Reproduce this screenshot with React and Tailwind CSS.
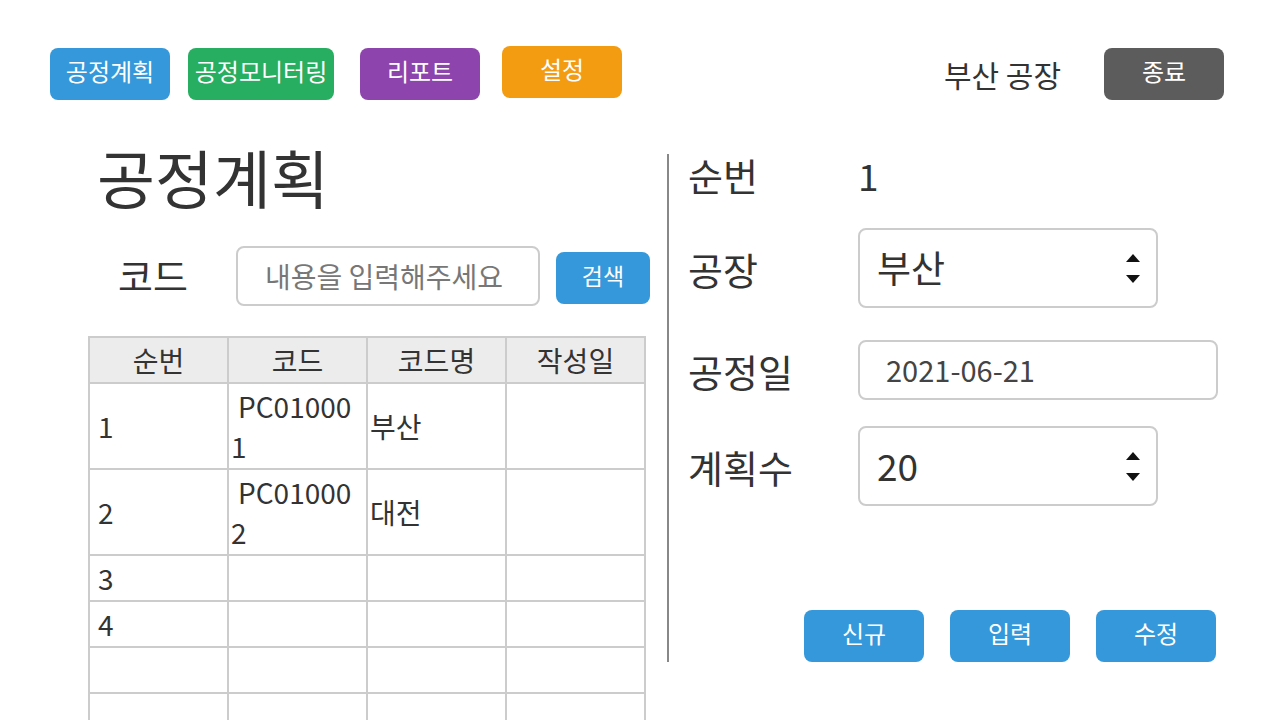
import { useState } from "react";

const FONT = "font-['Noto_Sans_CJK_KR','Noto_Sans',sans-serif]";

function NavBtn({ color, className = "", children }) {
  return (
    <button className={`h-[52px] w-[120px] shrink-0 rounded-lg pb-[6px] text-[24px] text-white ${color} ${className}`}>
      {children}
    </button>
  );
}

function Spinner() {
  return (
    <svg width="16" height="36" viewBox="0 0 16 36" className="shrink-0">
      <path d="M8 4 L15 12 L1 12 Z" fill="#111" />
      <path d="M1 25 L15 25 L8 33 Z" fill="#111" />
    </svg>
  );
}

const ROWS = [
  { no: "1", code: ["PC01000", "1"], name: "부산" },
  { no: "2", code: ["PC01000", "2"], name: "대전" },
  { no: "3" },
  { no: "4" },
  {},
  {},
];

export default function App() {
  const [keyword, setKeyword] = useState("");

  const td = "border-2 border-[#ccc] py-[2px] leading-[40px] align-middle";

  return (
    <div className={`w-[1280px] h-[720px] overflow-hidden bg-white text-[#333] ${FONT}`}>
      {/* Top nav */}
      <div className="flex items-start pt-[48px] pl-[50px] pr-[56px]">
        <NavBtn color="bg-[#3498db]">공정계획</NavBtn>
        <NavBtn color="bg-[#27ae60]" className="ml-[18px] !w-[146px]">공정모니터링</NavBtn>
        <NavBtn color="bg-[#8e44ad]" className="ml-[26px]">리포트</NavBtn>
        <NavBtn color="bg-[#f39c12]" className="ml-[22px] -mt-[2px]">설정</NavBtn>
        <div className="ml-auto flex items-center">
          <span className="text-[30px] text-[#333]">부산 공장</span>
          <NavBtn color="bg-[#5c5c5c]" className="ml-[43px]">종료</NavBtn>
        </div>
      </div>

      {/* Main */}
      <div className="flex mt-[30px]">
        {/* Left */}
        <div className="ml-[88px] w-[558px] shrink-0">
          <h1 className="ml-[9px] text-[63px] leading-[92px] font-normal">공정계획</h1>

          <div className="flex items-start mt-[24px]">
            <span className="ml-[30px] w-[118px] shrink-0 text-[38px] leading-[58px]">코드</span>
            <input
              value={keyword}
              onChange={e => setKeyword(e.target.value)}
              placeholder="내용을 입력해주세요"
              className="w-[304px] h-[60px] shrink-0 rounded-lg border-2 border-[#ccc] px-[27px] text-[28px] outline-none placeholder:text-[#777]"
            />
            <button className="ml-[16px] mt-[6px] h-[52px] w-[94px] shrink-0 rounded-lg bg-[#3498db] pb-[6px] text-[23px] text-white">
              검색
            </button>
          </div>

          <table className="mt-[30px] w-[558px] table-fixed border-collapse text-[28px]">
            <thead>
              <tr className="bg-[#ececec]">
                {["순번", "코드", "코드명", "작성일"].map(h => (
                  <th key={h} className="border-2 border-[#ccc] py-[2px] leading-[40px] font-normal text-center">
                    {h}
                  </th>
                ))}
              </tr>
            </thead>
            <tbody>
              {ROWS.map((r, i) => (
                <tr key={i}>
                  <td className={`${td} pl-[8px]`}>{r.no || "\u00a0"}</td>
                  <td className={`${td} pl-[2px]`}>
                    {r.code ? (
                      <>
                        <span className="pl-[7px]">{r.code[0]}</span>
                        <br />
                        {r.code[1]}
                      </>
                    ) : "\u00a0"}
                  </td>
                  <td className={`${td} pl-[2px]`}>{r.name || "\u00a0"}</td>
                  <td className={td}>{"\u00a0"}</td>
                </tr>
              ))}
            </tbody>
          </table>
        </div>

        {/* Divider */}
        <div className="ml-[21px] mt-[24px] w-[2px] h-[508px] shrink-0 bg-[#888]" />

        {/* Right */}
        <div className="ml-[19px] mt-[24px] min-w-0 flex-1 pr-[64px]">
          <div className="flex items-center h-[46px]">
            <span className="w-[170px] shrink-0 text-[38px] leading-[46px] -mt-[4px]">순번</span>
            <span className="text-[37px] leading-[46px] -mt-[4px]">1</span>
          </div>

          <div className="flex items-center mt-[28px]">
            <span className="w-[170px] shrink-0 text-[38px]">공장</span>
            <div className="w-[300px] h-[80px] shrink-0 rounded-lg border-2 border-[#ccc] flex items-center pl-[17px] pr-[15px]">
              <span className="flex-1 text-[37px]">부산</span>
              <Spinner />
            </div>
          </div>

          <div className="flex items-center mt-[32px]">
            <span className="w-[170px] shrink-0 text-[38px]">공정일</span>
            <div className="w-[360px] h-[60px] shrink-0 rounded-lg border-2 border-[#ccc] flex items-center pl-[26px]">
              <span className="text-[29px] text-[#444]">2021-06-21</span>
            </div>
          </div>

          <div className="flex items-center mt-[26px]">
            <span className="w-[170px] shrink-0 text-[38px]">계획수</span>
            <div className="w-[300px] h-[80px] shrink-0 rounded-lg border-2 border-[#ccc] flex items-center pl-[17px] pr-[15px]">
              <span className="flex-1 text-[37px]">20</span>
              <Spinner />
            </div>
          </div>

          <div className="flex justify-end gap-[26px] mt-[104px]">
            {["신규", "입력", "수정"].map(t => (
              <NavBtn key={t} color="bg-[#3498db]">{t}</NavBtn>
            ))}
          </div>
        </div>
      </div>
    </div>
  );
}
